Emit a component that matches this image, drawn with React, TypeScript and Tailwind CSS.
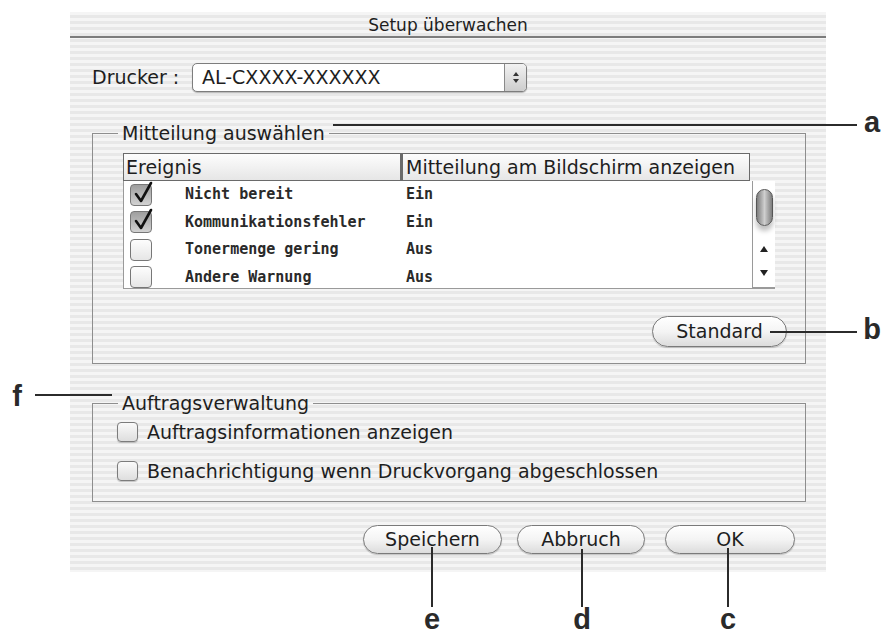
import React from "react";

// Aqua pinstripe background of the sheet
const stripes =
  "bg-[image:repeating-linear-gradient(180deg,#f5f5f5_0px,#f5f5f5_3px,#e8e8e8_3px,#e8e8e8_6px)]";

const events = [
  { name: "Nicht bereit", value: "Ein", checked: true },
  { name: "Kommunikationsfehler", value: "Ein", checked: true },
  { name: "Tonermenge gering", value: "Aus", checked: false },
  { name: "Andere Warnung", value: "Aus", checked: false },
];

function AquaButton({ label, className }: { label: string; className: string }) {
  return (
    <div
      className={`flex items-center justify-center rounded-full border border-[#7a7a7a] bg-gradient-to-b from-[#ffffff] via-[#f4f4f4] to-[#dcdcdc] text-[19px] leading-none shadow-[0_1px_1px_rgba(0,0,0,0.2)] ${className}`}
    >
      {label}
    </div>
  );
}

function TableCheckbox({ checked }: { checked: boolean }) {
  return (
    <div
      className={`relative w-[22px] h-[22px] rounded-[4px] border border-[#777] ${
        checked ? "bg-gradient-to-b from-[#9e9e9e] to-[#d2d2d2]" : "bg-gradient-to-b from-[#fdfdfd] to-[#e6e6e6]"
      }`}
    >
      {checked && (
        <svg className="absolute left-[1px] top-[-5px]" width="22" height="26" viewBox="0 0 22 26">
          <path d="M4 14 L9 21 L19 3" fill="none" stroke="#111" strokeWidth="2.6" strokeLinecap="round" strokeLinejoin="round" />
        </svg>
      )}
    </div>
  );
}

function PlainCheckbox() {
  return (
    <div className="w-[21px] h-[20px] rounded-[4px] border border-[#7c7c7c] bg-gradient-to-b from-[#fafafa] to-[#dedede] shadow-[0_1px_1px_rgba(0,0,0,0.2)]" />
  );
}

function Popup() {
  return (
    <div className="w-[335px] h-[29px] flex rounded-[5px] border border-[#7d7d7d] bg-white overflow-hidden shadow-[0_1px_1px_rgba(0,0,0,0.25)]">
      <div className="flex-1 flex items-center pl-[9px] text-[19px] leading-none">AL-CXXXX-XXXXXX</div>
      <div className="w-[22px] border-l border-[#8a8a8a] bg-gradient-to-b from-[#f2f2f2] to-[#cdcdcd] flex flex-col items-center justify-center gap-[3px]">
        <svg width="6" height="4" viewBox="0 0 6 4">
          <path d="M0 4 L3 0 L6 4 Z" fill="#333" />
        </svg>
        <svg width="6" height="4" viewBox="0 0 6 4">
          <path d="M0 0 L6 0 L3 4 Z" fill="#333" />
        </svg>
      </div>
    </div>
  );
}

function Scrollbar() {
  return (
    <div className="w-[23px] border-l border-b border-[#9a9a9a] bg-white flex flex-col items-center">
      <div className="mt-[8px] w-[17px] h-[37px] rounded-full border border-[#555] bg-gradient-to-r from-[#7e7e7e] via-[#cfcfcf] to-[#7e7e7e] shadow-[0_5px_5px_rgba(0,0,0,0.25)]" />
      <svg className="mt-[20px]" width="8" height="6" viewBox="0 0 8 6">
        <path d="M0 6 L4 0 L8 6 Z" fill="#222" />
      </svg>
      <svg className="mt-[18px]" width="8" height="6" viewBox="0 0 8 6">
        <path d="M0 0 L8 0 L4 6 Z" fill="#222" />
      </svg>
    </div>
  );
}

function EventTable() {
  return (
    <div className="w-[652px]">
      <div className="flex h-[28px] text-[19px] leading-none">
        <div className="w-[278px] flex items-center pl-[2px] border border-[#6a6a6a] bg-gradient-to-b from-[#fdfdfd] to-[#e6e6e6]">
          Ereignis
        </div>
        <div className="w-[349px] flex items-center pl-[3px] border border-l-2 border-[#6a6a6a] bg-gradient-to-b from-[#fdfdfd] to-[#e6e6e6]">
          Mitteilung am Bildschirm anzeigen
        </div>
      </div>
      <div className="flex h-[108px] bg-white border-l border-b border-[#9a9a9a]">
        <div className="flex-1 overflow-hidden font-['DejaVu_Sans_Mono',monospace] font-bold text-[15px] leading-none text-[#2a2a2a]">
          {events.map((e) => (
            <div key={e.name} className="flex items-center h-[27.5px]">
              <div className="w-[61px] pl-[6px]">
                <TableCheckbox checked={e.checked} />
              </div>
              <div className="w-[217px]">{e.name}</div>
              <div className="pl-[4px]">{e.value}</div>
            </div>
          ))}
        </div>
        <Scrollbar />
      </div>
    </div>
  );
}

function Callouts() {
  const label = "absolute w-[30px] text-center font-['Liberation_Sans',sans-serif] font-bold text-[29px] leading-none text-[#2a2a2a]";
  return (
    <>
      {/* a */}
      <div className="absolute left-[333px] top-[124px] w-[524px] h-[2px] bg-[#2b2b2b]" />
      <div className={`${label} left-[857px] top-[108px]`}>a</div>
      {/* b */}
      <div className="absolute left-[770px] top-[331px] w-[87px] h-[2px] bg-[#2b2b2b]" />
      <div className={`${label} left-[857px] top-[315px]`}>b</div>
      {/* f */}
      <div className="absolute left-[35px] top-[394px] w-[77px] h-[2px] bg-[#2b2b2b]" />
      <div className={`${label} left-[2px] top-[382px]`}>f</div>
      {/* e, d, c */}
      <div className="absolute left-[431px] top-[547px] w-[2px] h-[60px] bg-[#2b2b2b]" />
      <div className={`${label} left-[417px] top-[605px]`}>e</div>
      <div className="absolute left-[581px] top-[549px] w-[2px] h-[58px] bg-[#2b2b2b]" />
      <div className={`${label} left-[567px] top-[605px]`}>d</div>
      <div className="absolute left-[727px] top-[548px] w-[2px] h-[59px] bg-[#2b2b2b]" />
      <div className={`${label} left-[713px] top-[605px]`}>c</div>
    </>
  );
}

export default function App() {
  return (
    <div className="relative w-[887px] h-[635px] overflow-hidden bg-white font-['DejaVu_Sans',sans-serif] text-[#1e1e1e]">
      <div className={`ml-[70px] mt-[12px] w-[756px] h-[560px] flex flex-col ${stripes}`}>
        <div className="h-[24px] pt-[2px] flex items-center justify-center text-[17px] leading-none">
          Setup überwachen
        </div>
        <div className="h-[2px] bg-[#7c7c7c]" />

        <div className="mt-[25px] ml-[22px] flex items-center">
          <span className="w-[100px] whitespace-nowrap text-[19px] leading-none">Drucker :</span>
          <Popup />
        </div>

        <fieldset className="mt-[30px] ml-[22px] w-[714px] h-[242px] border border-[#8e8e8e] pl-[30px] pr-[18px] pt-[9px]">
          <legend className="ml-[-5px] px-[4px] text-[19px] leading-[22px]">Mitteilung auswählen</legend>
          <EventTable />
          <div className="mt-[27px] flex justify-end">
            <AquaButton label="Standard" className="w-[135px] h-[31px]" />
          </div>
        </fieldset>

        <fieldset className="mt-[28px] ml-[22px] w-[714px] h-[110px] border border-[#8e8e8e] pl-[24px] pt-[7px]">
          <legend className="ml-[1px] px-[4px] text-[19px] leading-[22px]">Auftragsverwaltung</legend>
          <div className="flex flex-col gap-[17px] text-[19px] leading-none">
            <div className="flex items-center h-[22px] gap-[9px]">
              <PlainCheckbox />
              <span>Auftragsinformationen anzeigen</span>
            </div>
            <div className="flex items-center h-[22px] gap-[9px]">
              <PlainCheckbox />
              <span>Benachrichtigung wenn Druckvorgang abgeschlossen</span>
            </div>
          </div>
        </fieldset>

        <div className="mt-[23px] pr-[31px] flex justify-end">
          <AquaButton label="Speichern" className="w-[139px] h-[29px]" />
          <AquaButton label="Abbruch" className="ml-[15px] w-[128px] h-[29px]" />
          <AquaButton label="OK" className="ml-[20px] w-[130px] h-[29px]" />
        </div>
      </div>
      <Callouts />
    </div>
  );
}
